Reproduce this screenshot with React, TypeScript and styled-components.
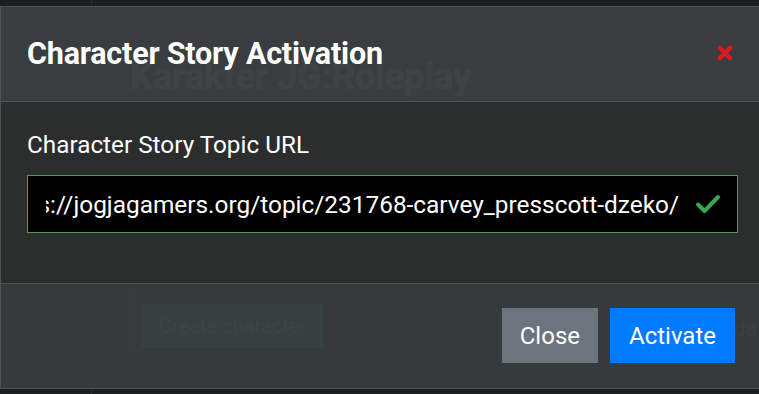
import React from "react";
import styled, { createGlobalStyle } from "styled-components";

const Global = createGlobalStyle`
  html, body { margin: 0; padding: 0; background: #1c1d1e; }
  body { font-family: Roboto, "Noto Sans", "Liberation Sans", sans-serif; }
  * { box-sizing: border-box; }
`;

const Screen = styled.div`
  position: relative;
  width: 759px;
  height: 394px;
  overflow: hidden;
  background: #1d1e1f;
  display: flex;
`;

const Sidebar = styled.div`
  width: 92px;
  flex-shrink: 0;
  border-right: 1px solid #2c2d2e;
`;

const Main = styled.div`
  flex: 1;
  display: flex;
  flex-direction: column;
  padding: 57px 0 0 38px;
`;

const PageTitle = styled.h1`
  margin: 0;
  font-size: 36px;
  line-height: 40px;
  font-weight: 700;
  color: #8a8c8e;
  white-space: nowrap;
`;

const GhostRow = styled.div<{ $top: number; $indent: number }>`
  display: flex;
  gap: 36px;
  margin-top: ${(p) => p.$top}px;
  padding-left: ${(p) => p.$indent}px;
  font-size: 18px;
  line-height: 22px;
  color: #4a4a4a;
  white-space: nowrap;
`;

const GhostCard = styled.div`
  margin-top: 11px;
  display: flex;
  align-items: center;
  gap: 411px;
  padding: 9px 0 0 11px;
  border-left: 1px solid #3a3b3c;
  height: 70px;
`;

const GhostButton = styled.div`
  width: 181px;
  height: 44px;
  flex-shrink: 0;
  background: #2f6e3e;
  color: #a6b0aa;
  font-size: 20px;
  display: flex;
  align-items: center;
  justify-content: center;
  border-radius: 2px;
`;

const GhostTail = styled.div`
  font-size: 20px;
  color: #7a7a7a;
  margin-top: 6px;
  white-space: nowrap;
`;

const Modal = styled.div`
  position: absolute;
  top: 6px;
  left: 0;
  right: -10px;
  bottom: 5px;
  display: flex;
  flex-direction: column;
  border: 1px solid #505254;
`;

const Header = styled.div`
  height: 95px;
  display: flex;
  align-items: center;
  justify-content: space-between;
  padding: 0 34px 0 26px;
  background: rgba(60, 63, 66, 0.95);
  border-bottom: 1px solid #4f5154;
`;

const Title = styled.h5`
  margin: 0;
  font-size: 30.5px;
  line-height: 36px;
  font-weight: 700;
  color: #ffffff;
  letter-spacing: -0.2px;
`;

const CloseX = styled.button`
  border: none;
  background: transparent;
  padding: 0;
  width: 18px;
  height: 18px;
  display: flex;
  margin-top: -3px;
  cursor: pointer;
`;

const Body = styled.div`
  height: 181px;
  padding: 29px 23px 0 26px;
  background: rgba(44, 45, 45, 0.97);
  display: flex;
  flex-direction: column;
  gap: 16px;
`;

const Label = styled.label`
  font-size: 24.3px;
  line-height: 28px;
  color: #ffffff;
`;

const InputBox = styled.div`
  height: 58px;
  width: 711px;
  background: #000000;
  border: 1px solid #4f9a5a;
  display: flex;
  align-items: center;
  padding: 0 16px 0 18px;
  gap: 16px;
`;

const InputText = styled.div`
  flex: 1;
  overflow: hidden;
  display: flex;
  justify-content: flex-end;
  white-space: nowrap;
  font-size: 24.4px;
  color: #ffffff;
`;

const Footer = styled.div`
  flex: 1;
  border-top: 1px solid #4f5154;
  background: rgba(57, 60, 63, 0.95);
  display: flex;
  align-items: center;
  justify-content: flex-end;
  gap: 12px;
  padding: 0 33px 0 0;
`;

const Btn = styled.button<{ $variant: "secondary" | "primary" }>`
  height: 55px;
  border: none;
  border-radius: 0;
  font-family: inherit;
  font-size: 24px;
  color: #ffffff;
  padding: 0 ${(p) => (p.$variant === "primary" ? 19 : 18)}px;
  background: ${(p) => (p.$variant === "primary" ? "#007bff" : "#6c757d")};
  margin-top: -1px;
`;

export default function App() {
  return (
    <>
      <Global />
      <Screen>
        <Sidebar />
        <Main>
          <PageTitle>Karakter JG:Roleplay</PageTitle>
          <GhostRow $top={18} $indent={350}>
            <span>Level</span>
            <span>Status</span>
          </GhostRow>
          <GhostRow $top={116} $indent={14}>
            <span>Karakter</span>
            <span>Carvey_Presscott</span>
            <span>3</span>
            <span>Chad Slimani A</span>
          </GhostRow>
          <GhostCard>
            <GhostButton>Create character</GhostButton>
            <GhostTail>da c</GhostTail>
          </GhostCard>
        </Main>
        <Modal>
          <Header>
            <Title>Character Story Activation</Title>
            <CloseX aria-label="Close">
              <svg width="18" height="18" viewBox="0 0 18 18">
                <path d="M2.5 2.5 L15.5 15.5 M15.5 2.5 L2.5 15.5" stroke="#e3161d" strokeWidth="4" strokeLinecap="butt" />
              </svg>
            </CloseX>
          </Header>
          <Body>
            <Label>Character Story Topic URL</Label>
            <InputBox>
              <InputText>
                <span>https://jogjagamers.org/topic/231768-carvey_presscott-dzeko/</span>
              </InputText>
              <svg width="26" height="22" viewBox="0 0 26 22">
                <path d="M3 11.5 L9.5 18 L23 4" fill="none" stroke="#38a852" strokeWidth="4" strokeLinecap="round" strokeLinejoin="round" />
              </svg>
            </InputBox>
          </Body>
          <Footer>
            <Btn $variant="secondary">Close</Btn>
            <Btn $variant="primary">Activate</Btn>
          </Footer>
        </Modal>
      </Screen>
    </>
  );
}
